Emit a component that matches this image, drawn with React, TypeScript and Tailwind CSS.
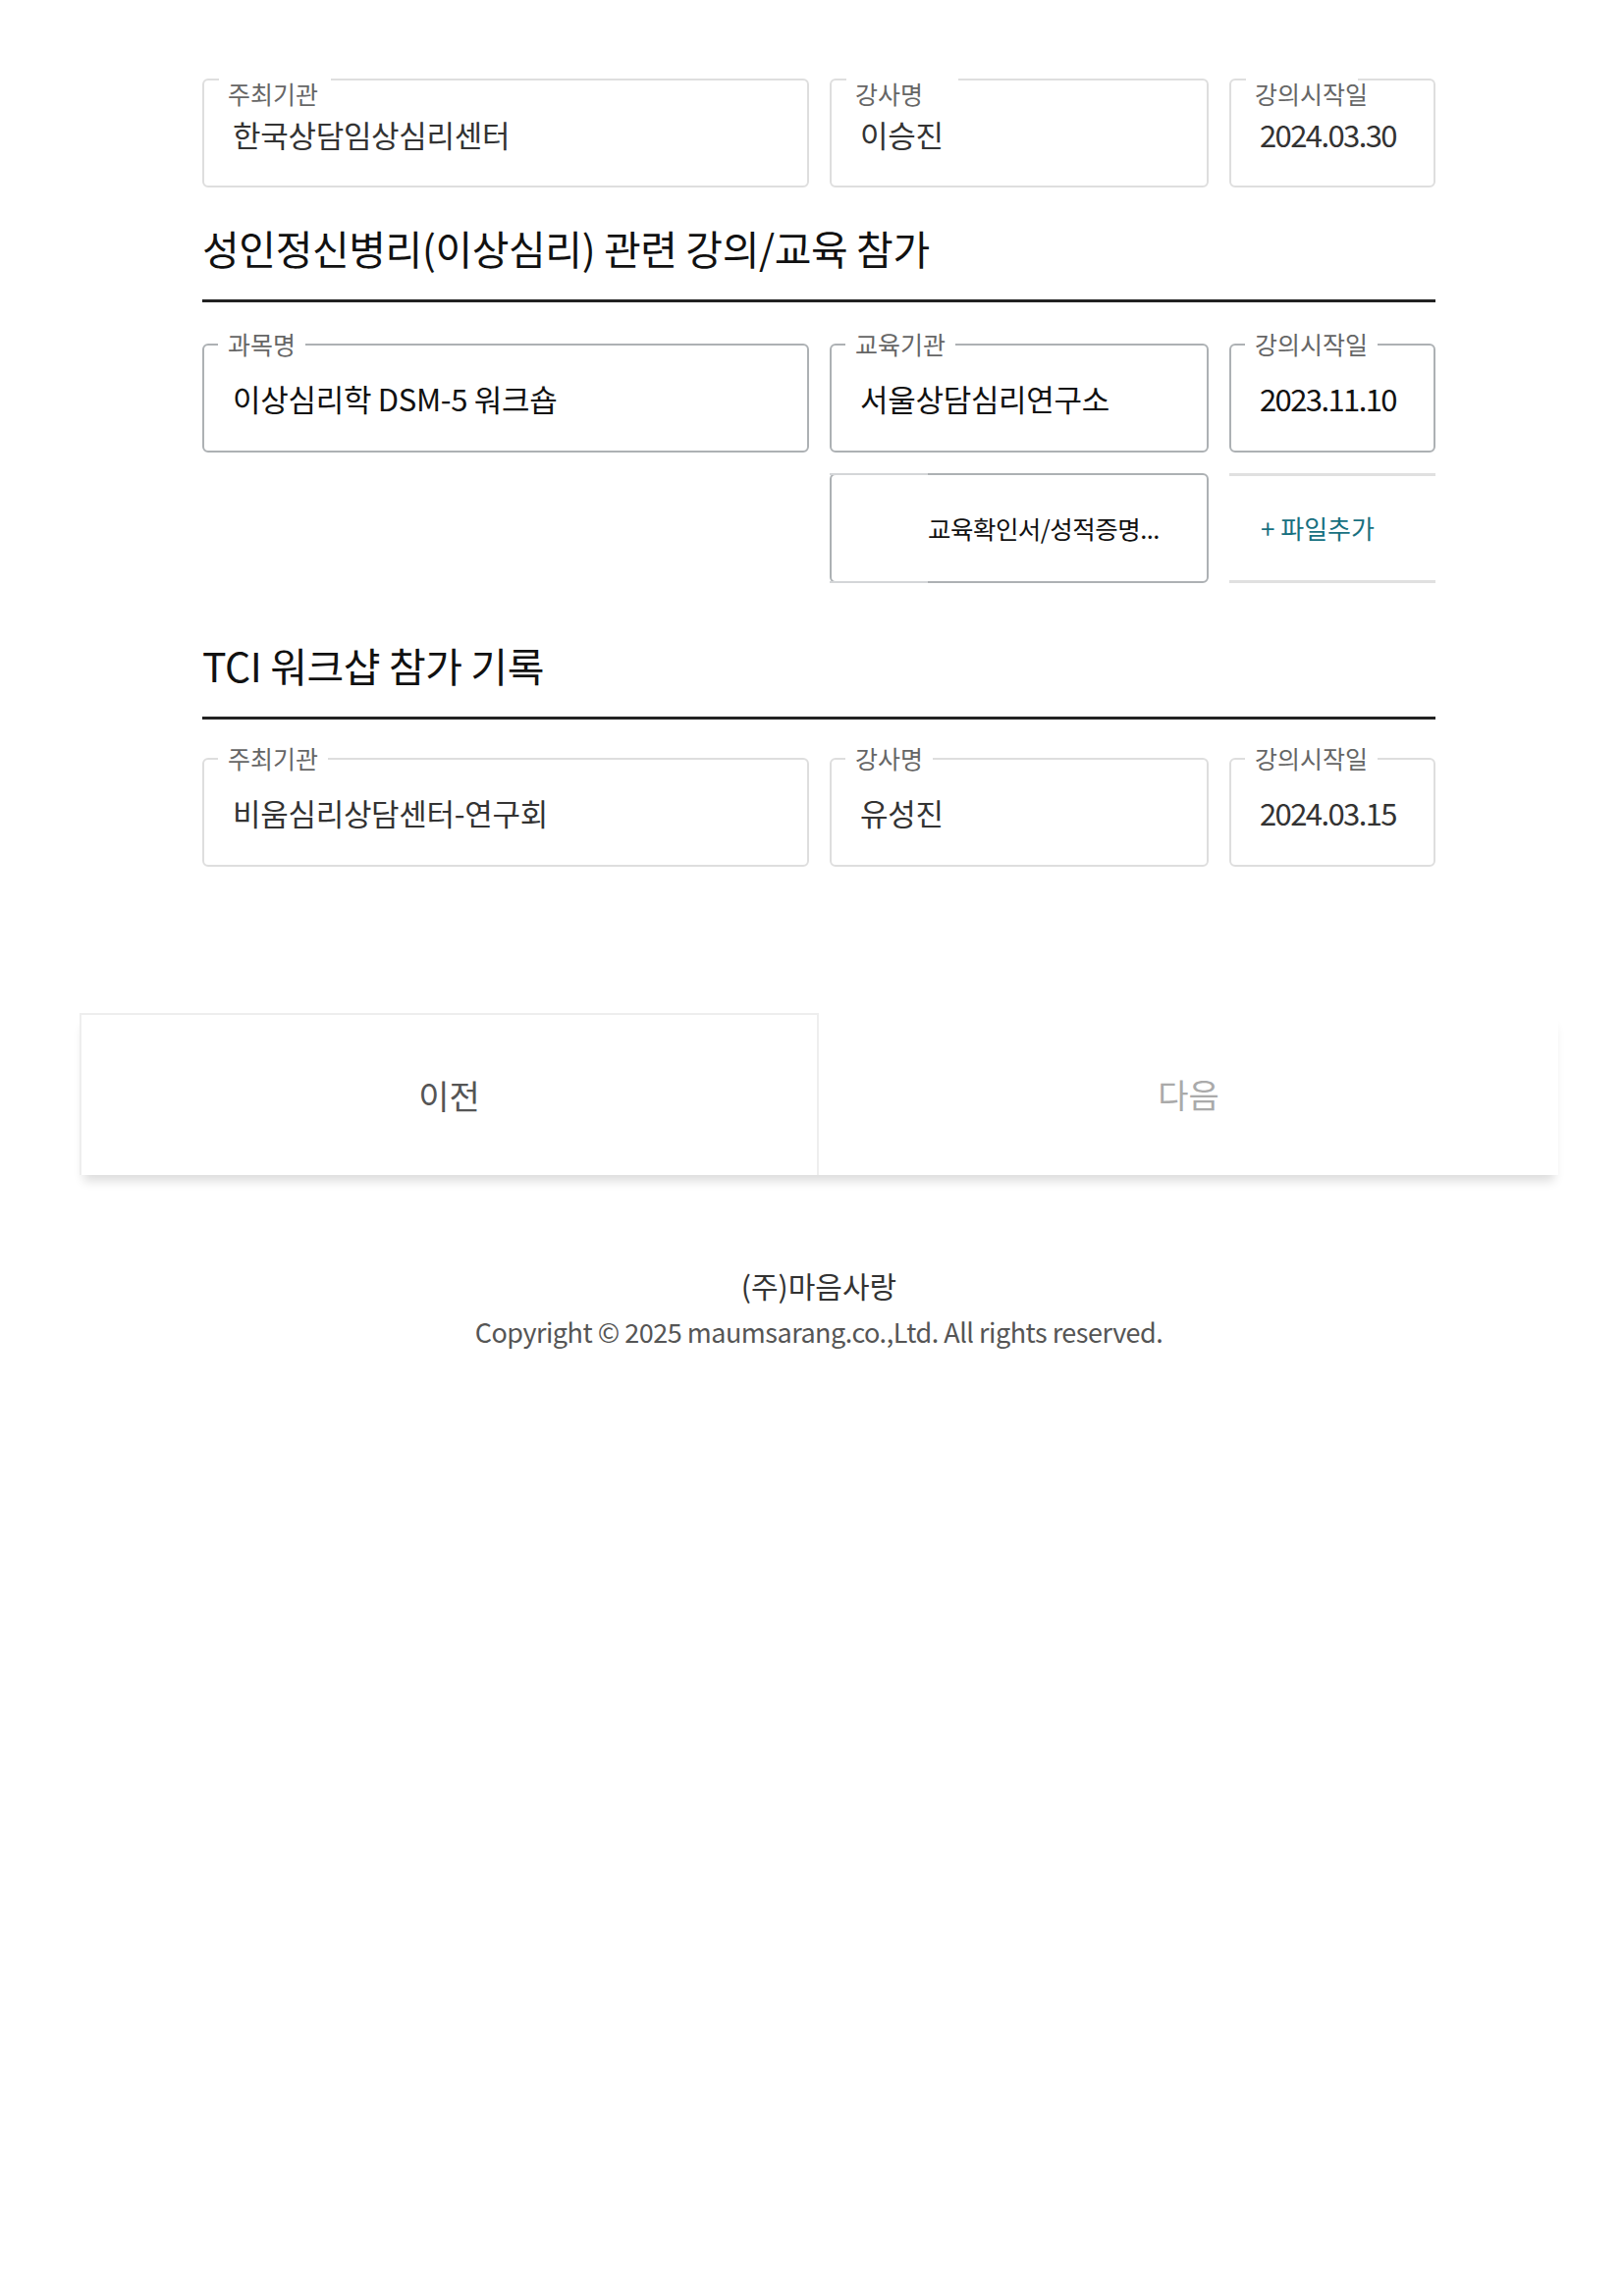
import React from "react";

const FONT = { fontFamily: '"Noto Sans CJK KR", "Noto Sans", sans-serif' };

function TopLabelBox({ label, value, date }: { label: string; value: string; date?: boolean }) {
  return (
    <div className="relative h-[111px] rounded-[6px] border-2 border-[#dedede] bg-white">
      <span className="absolute left-[15px] top-[-2px] h-[3px] w-[114px] bg-white" />
      <div className="pl-[24px] pt-0 text-[25px] leading-[26px] text-[#666]">{label}</div>
      <div
        className={`mt-[11px] pl-[29px] text-[31px] leading-[36px] text-[#333] ${
          date ? "tracking-[-1.6px]" : "tracking-[-0.3px]"
        }`}
      >
        {value}
      </div>
    </div>
  );
}

function LegendBox({
  label,
  value,
  border,
  valueColor,
  date,
}: {
  label: string;
  value: string;
  border: string;
  valueColor: string;
  date?: boolean;
}) {
  return (
    <div className={`relative flex h-[111px] items-center rounded-[6px] border-2 bg-white ${border}`}>
      <span className="absolute left-[14px] top-[-15px] bg-white px-[10px] text-[25px] leading-[26px] text-[#666]">
        {label}
      </span>
      <div
        className={`pl-[29px] text-[31px] leading-[36px] ${valueColor} ${
          date ? "tracking-[-1.6px]" : "tracking-[-0.3px]"
        }`}
      >
        {value}
      </div>
    </div>
  );
}

function Heading({ children }: { children: React.ReactNode }) {
  return (
    <div className="border-b-[3px] border-[#222] pb-[28px] text-[41px] leading-[50px] tracking-[-0.4px] text-[#111]">
      {children}
    </div>
  );
}

export default function App() {
  return (
    <div className="h-[2339px] w-[1653px] bg-white" style={FONT}>
      <div className="ml-[81px] w-[1506px] pt-[80px]">
        <div className="px-[125px]">
          {/* Row 1 */}
          <div className="grid grid-cols-[618px_386px_210px] gap-x-[21px]">
            <TopLabelBox label="주최기관" value="한국상담임상심리센터" />
            <TopLabelBox label="강사명" value="이승진" />
            <TopLabelBox label="강의시작일" value="2024.03.30" date />
          </div>

          {/* Heading 1 */}
          <div className="mt-[36px]">
            <Heading>성인정신병리(이상심리) 관련 강의/교육 참가</Heading>
          </div>

          {/* Row 2 */}
          <div className="mt-[42px] grid grid-cols-[618px_386px_210px] gap-x-[21px]">
            <LegendBox label="과목명" value="이상심리학 DSM-5 워크숍" border="border-[#adb1b4]" valueColor="text-[#111]" />
            <LegendBox label="교육기관" value="서울상담심리연구소" border="border-[#adb1b4]" valueColor="text-[#111]" />
            <LegendBox label="강의시작일" value="2023.11.10" border="border-[#adb1b4]" valueColor="text-[#111]" date />
          </div>

          {/* File row */}
          <div className="mt-[21px] grid grid-cols-[618px_386px_210px] gap-x-[21px]">
            <div />
            <div className="relative flex h-[112px] items-center rounded-[6px] border-2 border-[#adb1b4] bg-white pl-[98px]">
              <span className="absolute left-[-2px] top-[-2px] h-[2px] w-[100px] bg-[#d4d6d8]" />
              <span className="absolute bottom-[-2px] left-[-2px] h-[2px] w-[100px] bg-[#d4d6d8]" />
              <span className="text-[25.5px] leading-[30px] tracking-[-0.5px] text-[#111]">교육확인서/성적증명...</span>
            </div>
            <div className="flex h-[112px] items-center border-y-[3px] border-[#e0e0e0] pl-[32px]">
              <span className="text-[26px] leading-[30px] text-[#17707f]">+ 파일추가</span>
            </div>
          </div>

          {/* Heading 2 */}
          <div className="mt-[58px]">
            <Heading>TCI 워크샵 참가 기록</Heading>
          </div>

          {/* Row 3 */}
          <div className="mt-[39px] grid grid-cols-[618px_386px_210px] gap-x-[21px]">
            <LegendBox label="주최기관" value="비움심리상담센터-연구회" border="border-[#dedede]" valueColor="text-[#333]" />
            <LegendBox label="강사명" value="유성진" border="border-[#dedede]" valueColor="text-[#333]" />
            <LegendBox label="강의시작일" value="2024.03.15" border="border-[#dedede]" valueColor="text-[#333]" date />
          </div>
        </div>

        {/* Buttons */}
        <div className="mt-[149px] flex h-[165px] shadow-[0_10px_10px_-4px_rgba(0,0,0,0.14)]">
          <button className="flex h-full w-[753px] items-center justify-center border-2 border-b-0 border-[#eeeeee] bg-white text-[34px] text-[#555]">
            이전
          </button>
          <button className="flex h-full flex-1 items-center justify-center bg-white text-[34px] text-[#aaa]">
            다음
          </button>
        </div>

        {/* Footer */}
        <div className="mt-[92px] text-center text-[30px] leading-[40px] text-[#333]">(주)마음사랑</div>
        <div className="mt-[8px] text-center text-[27px] leading-[40px] tracking-[-0.5px] text-[#555]">
          Copyright © 2025 maumsarang.co.,Ltd. All rights reserved.
        </div>
      </div>
    </div>
  );
}
